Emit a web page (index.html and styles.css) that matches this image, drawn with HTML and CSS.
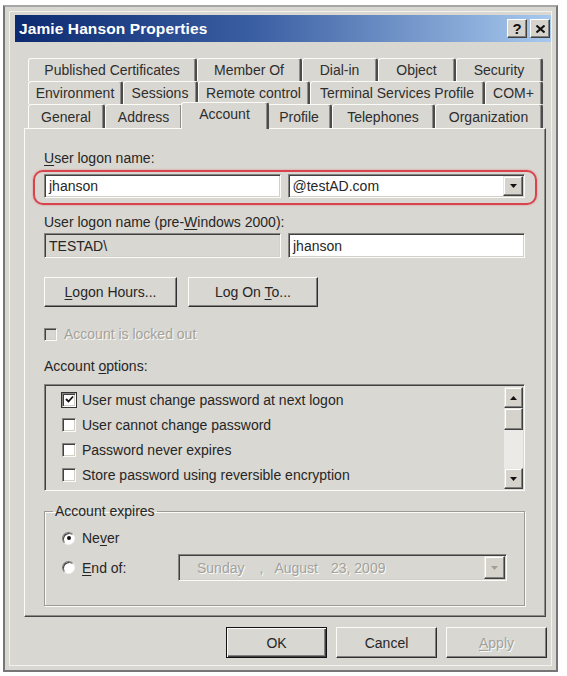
FILE: index.html
```html
<!DOCTYPE html>
<html>
<head>
<meta charset="utf-8">
<title>Jamie Hanson Properties</title>
<link rel="stylesheet" href="styles.css">
</head>
<body>
<div class="window">
  <div class="titlebar">
    <span class="title">Jamie Hanson Properties</span>
    <div class="tbtns">
      <span class="tbtn">?</span>
      <span class="tbtn">
        <svg width="9" height="8" viewBox="0 0 9 8"><path d="M0.5 0.5L8.5 7.5M8.5 0.5L0.5 7.5" stroke="#111" stroke-width="2"/></svg>
      </span>
    </div>
  </div>

  <div class="tabs">
    <div class="tabrow r1">
      <div class="tab">Published Certificates</div>
      <div class="tab">Member Of</div>
      <div class="tab">Dial-in</div>
      <div class="tab">Object</div>
      <div class="tab">Security</div>
    </div>
    <div class="tabrow r2">
      <div class="tab">Environment</div>
      <div class="tab">Sessions</div>
      <div class="tab">Remote control</div>
      <div class="tab">Terminal Services Profile</div>
      <div class="tab">COM+</div>
    </div>
    <div class="tabrow r3">
      <div class="tab">General</div>
      <div class="tab">Address</div>
      <div class="tab sel">Account</div>
      <div class="tab">Profile</div>
      <div class="tab">Telephones</div>
      <div class="tab">Organization</div>
    </div>
  </div>

  <div class="panel">
    <div class="lbl"><u>U</u>ser logon name:</div>
    <div class="hilite">
      <div class="field white"><span class="val">jhanson</span></div>
      <div class="field white combo">
        <span class="val">@testAD.com</span>
        <span class="ddbtn"><svg width="7" height="4" viewBox="0 0 7 4"><path d="M0 0H7L3.5 4Z" fill="#111"/></svg></span>
      </div>
    </div>

    <div class="lbl lbl2">User logon name (pre-<u>W</u>indows 2000):</div>
    <div class="fieldrow">
      <div class="field tall"><span class="val">TESTAD\</span></div>
      <div class="field tall white"><span class="val">jhanson</span></div>
    </div>

    <div class="btnrow">
      <div class="btn b1"><span><u>L</u>ogon Hours...</span></div>
      <div class="btn b2"><span>Log On <u>T</u>o...</span></div>
    </div>

    <div class="lockrow">
      <span class="chk dis"></span>
      <span class="distext">Account is locked out</span>
    </div>

    <div class="lbl lbl3">Account <u>o</u>ptions:</div>
    <div class="listbox">
      <div class="items">
        <div class="item"><span class="chk focus"><svg width="9" height="9" viewBox="0 0 9 9"><path d="M1 4L3.5 6.5L8 1.5" fill="none" stroke="#111" stroke-width="1.8"/></svg></span><span>User must change password at next logon</span></div>
        <div class="item"><span class="chk"></span><span>User cannot change password</span></div>
        <div class="item"><span class="chk"></span><span>Password never expires</span></div>
        <div class="item"><span class="chk"></span><span>Store password using reversible encryption</span></div>
      </div>
      <div class="scrollbar">
        <span class="sbtn"><svg width="7" height="4" viewBox="0 0 7 4"><path d="M0 4H7L3.5 0Z" fill="#111"/></svg></span>
        <span class="thumb"></span>
        <span class="track"></span>
        <span class="sbtn"><svg width="7" height="4" viewBox="0 0 7 4"><path d="M0 0H7L3.5 4Z" fill="#111"/></svg></span>
      </div>
    </div>

    <fieldset class="group">
      <legend>Account expires</legend>
      <div class="radiorow">
        <span class="radio on"></span>
        <span class="rlabel">Ne<u>v</u>er</span>
      </div>
      <div class="radiorow row2">
        <span class="radio"></span>
        <span class="rlabel endof"><u>E</u>nd of:</span>
        <div class="datepick">
          <span class="dtext">
            <span>Sunday</span><span class="comma">,</span><span class="month">August</span><span class="day">23, 2009</span>
          </span>
          <span class="ddbtn disbtn"><svg width="9" height="6" viewBox="0 0 9 6"><path d="M1 1H8L4.5 5Z" fill="#a09e98"/></svg></span>
        </div>
      </div>
    </fieldset>
  </div>

  <div class="footer">
    <div class="btn fbtn default"><span>OK</span></div>
    <div class="btn fbtn"><span>Cancel</span></div>
    <div class="btn fbtn distext"><span><u>A</u>pply</span></div>
  </div>
</div>
</body>
</html>
```

FILE: styles.css
```css
* { box-sizing: border-box; }

body {
  margin: 0;
  background: #ffffff;
  font-family: "Liberation Sans", Arial, sans-serif;
  font-size: 14px;
  color: #262626;
}

u { text-decoration: underline; text-underline-offset: 2px; }

.window {
  margin: 5px 0 0 3px;
  width: 555px;
  height: 667px;
  background: #d9d7d1;
  border: 2px solid #767676;
  border-top-color: #a6a6a6;
  box-shadow: inset 0 0 0 4px #d9d7d1, inset 0 0 0 5px #f3f2ee;
  padding: 8px 5px 0 10px;
}

/* title bar */
.titlebar {
  height: 27px;
  display: flex;
  align-items: center;
  justify-content: space-between;
  background: linear-gradient(90deg, #0c2a70 0%, #3b5fa3 45%, #a8c9ee 100%);
  padding: 0 1px 0 4px;
}
.title {
  color: #fff;
  font-weight: bold;
  font-size: 15.5px;
  letter-spacing: 0.1px;
}
.tbtns { display: flex; gap: 3px; }
.tbtn {
  width: 20px;
  height: 19px;
  display: flex;
  align-items: center;
  justify-content: center;
  background: #d6d3cc;
  border: 1px solid;
  border-color: #fff #404040 #404040 #fff;
  box-shadow: inset -1px -1px #808080;
  font-weight: bold;
  font-size: 15px;
  color: #111;
}

/* tabs */
.tabs { margin: 16px 0 0 13px; width: 515px; }
.tabrow { display: grid; height: 23px; }
.r1 { grid-template-columns: 169px 105px 76px 78px 87px; }
.r2 { grid-template-columns: 95px 75px 112px 175px 58px; }
.r3 { grid-template-columns: 77px 78px 84px 65px 103px 108px; height: 24px; }
.tab {
  display: flex;
  align-items: center;
  justify-content: center;
  white-space: nowrap;
  border: 1px solid #fbfbf8;
  border-bottom: 0;
  border-right: 2px solid #4c4c4c;
  border-radius: 3px 3px 0 0;
  box-shadow: inset -1px 0 #8e8c88;
  color: #2e2e2e;
}
.tab.sel {
  margin: -2px -2px -1px -2px;
  position: relative;
  z-index: 1;
  background: #d9d7d1;
  padding-bottom: 4px;
}

/* panel */
.panel {
  width: 522px;
  height: 489px;
  margin-left: 9px;
  border: 1px solid;
  border-color: #fbfbf8 #454545 #454545 #fbfbf8;
  box-shadow: inset -1px -1px #8e8c88;
  padding: 21px 20px 0 19px;
}

.lbl { height: 17px; line-height: 17px; }
.lbl2 { margin-top: 9px; }
.lbl3 { margin-top: 17px; }

.hilite {
  margin: 3px -12px 0 -11px;
  border: 2px solid #d8434e;
  border-radius: 10px;
  box-shadow: 0 0 2px rgba(220, 70, 80, 0.6);
  padding: 2px 10px 5px 9px;
  display: flex;
  gap: 7px;
}

.field {
  flex: 1;
  height: 24px;
  display: flex;
  align-items: center;
  border: 1px solid;
  border-color: #868480 #fbfbf8 #fbfbf8 #868480;
  box-shadow: inset 1px 1px #404040, inset -1px -1px #d4d0c8;
  padding-left: 4px;
  background: #d9d7d1;
}
.field.white { background: #fff; }
.field.tall { height: 25px; }
.val { flex: 1; }
.combo { padding-right: 1px; }

.ddbtn {
  width: 20px;
  height: 20px;
  display: flex;
  align-items: center;
  justify-content: center;
  background: #d6d3cc;
  border: 1px solid;
  border-color: #e8e6e0 #404040 #404040 #e8e6e0;
  box-shadow: inset -1px -1px #808080, inset 1px 1px #fff;
}

.fieldrow { display: flex; gap: 7px; margin-top: 2px; }

.btnrow { display: flex; gap: 11px; margin-top: 19px; }
.btn {
  height: 30px;
  display: flex;
  align-items: center;
  justify-content: center;
  border: 1px solid;
  border-color: #fbfbf8 #303030 #303030 #fbfbf8;
  box-shadow: inset -1px -1px #808080;
  white-space: nowrap;
}
.b1 { width: 133px; }
.b2 { width: 130px; }

.lockrow {
  margin-top: 20px;
  height: 14px;
  display: flex;
  align-items: center;
  gap: 7px;
}
.distext {
  color: #a3a19b;
  text-shadow: 1px 1px 0 #fbfbf8;
}

.chk {
  width: 14px;
  height: 14px;
  flex: none;
  display: flex;
  align-items: center;
  justify-content: center;
  background: #fff;
  border: 1px solid;
  border-color: #868480 #fbfbf8 #fbfbf8 #868480;
  box-shadow: inset 1px 1px #404040, inset -1px -1px #d4d0c8;
}
.chk.dis { background: #d9d7d1; width: 13px; height: 13px; }
.chk.focus { outline: 1px solid #333; outline-offset: 0; }

/* listbox */
.listbox {
  margin-top: 9px;
  height: 107px;
  display: flex;
  border: 1px solid;
  border-color: #868480 #fbfbf8 #fbfbf8 #868480;
  box-shadow: inset 1px 1px #404040;
  padding: 2px 1px 1px 1px;
  background: #dad8d2;
}
.items { flex: 1; padding-left: 16px; }
.item {
  height: 25px;
  display: flex;
  align-items: center;
  gap: 6px;
  white-space: nowrap;
}
.scrollbar {
  width: 19px;
  display: flex;
  flex-direction: column;
}
.sbtn, .thumb {
  height: 21px;
  display: flex;
  align-items: center;
  justify-content: center;
  background: #d6d3cc;
  border: 1px solid;
  border-color: #e8e6e0 #404040 #404040 #e8e6e0;
  box-shadow: inset -1px -1px #808080, inset 1px 1px #fff;
}
.thumb { height: 22px; }
.track {
  flex: 1;
  background: #ebeae6;
}

/* group */
.group {
  margin: 12px 0 0 0;
  height: 103px;
  padding: 8px 0 0 17px;
  border: 1px solid #9c9a94;
  box-shadow: inset 1px 1px #fbfbf8, 1px 1px #fbfbf8;
}
.group legend {
  padding: 0 2px;
  margin-left: -9px;
  line-height: 17px;
}
.radiorow {
  display: flex;
  align-items: center;
  height: 20px;
}
.row2 { height: 27px; margin-top: 6px; }
.radio {
  width: 13px;
  height: 13px;
  flex: none;
  border-radius: 50%;
  background: #fff;
  border: 1px solid;
  border-color: #777 #f2f2f2 #f2f2f2 #777;
  box-shadow: inset 1px 1px #404040;
  display: flex;
  align-items: center;
  justify-content: center;
}
.radio.on::after {
  content: "";
  width: 4px;
  height: 4px;
  border-radius: 50%;
  background: #111;
}
.rlabel { margin-left: 7px; }
.endof { width: 96px; }

.datepick {
  width: 329px;
  height: 27px;
  display: flex;
  align-items: center;
  border: 1px solid;
  border-color: #868480 #fbfbf8 #fbfbf8 #868480;
  box-shadow: inset 1px 1px #404040, inset -1px -1px #d4d0c8;
  padding: 1px 1px 1px 18px;
}
.dtext {
  flex: 1;
  display: flex;
  color: #a3a19b;
  text-shadow: 1px 1px 0 #fbfbf8;
}
.comma { margin-left: 15px; }
.month { margin-left: 11px; }
.day { margin-left: 13px; }
.disbtn { width: 21px; height: 23px; }

/* footer */
.footer {
  display: flex;
  justify-content: flex-end;
  gap: 9px;
  margin-top: 10px;
  padding-right: 4px;
}
.fbtn { width: 101px; height: 31px; }
.default {
  border: 1px solid #111;
  box-shadow: inset 1px 1px #fbfbf8, inset -1px -1px #404040, inset -2px -2px #808080;
}
```
